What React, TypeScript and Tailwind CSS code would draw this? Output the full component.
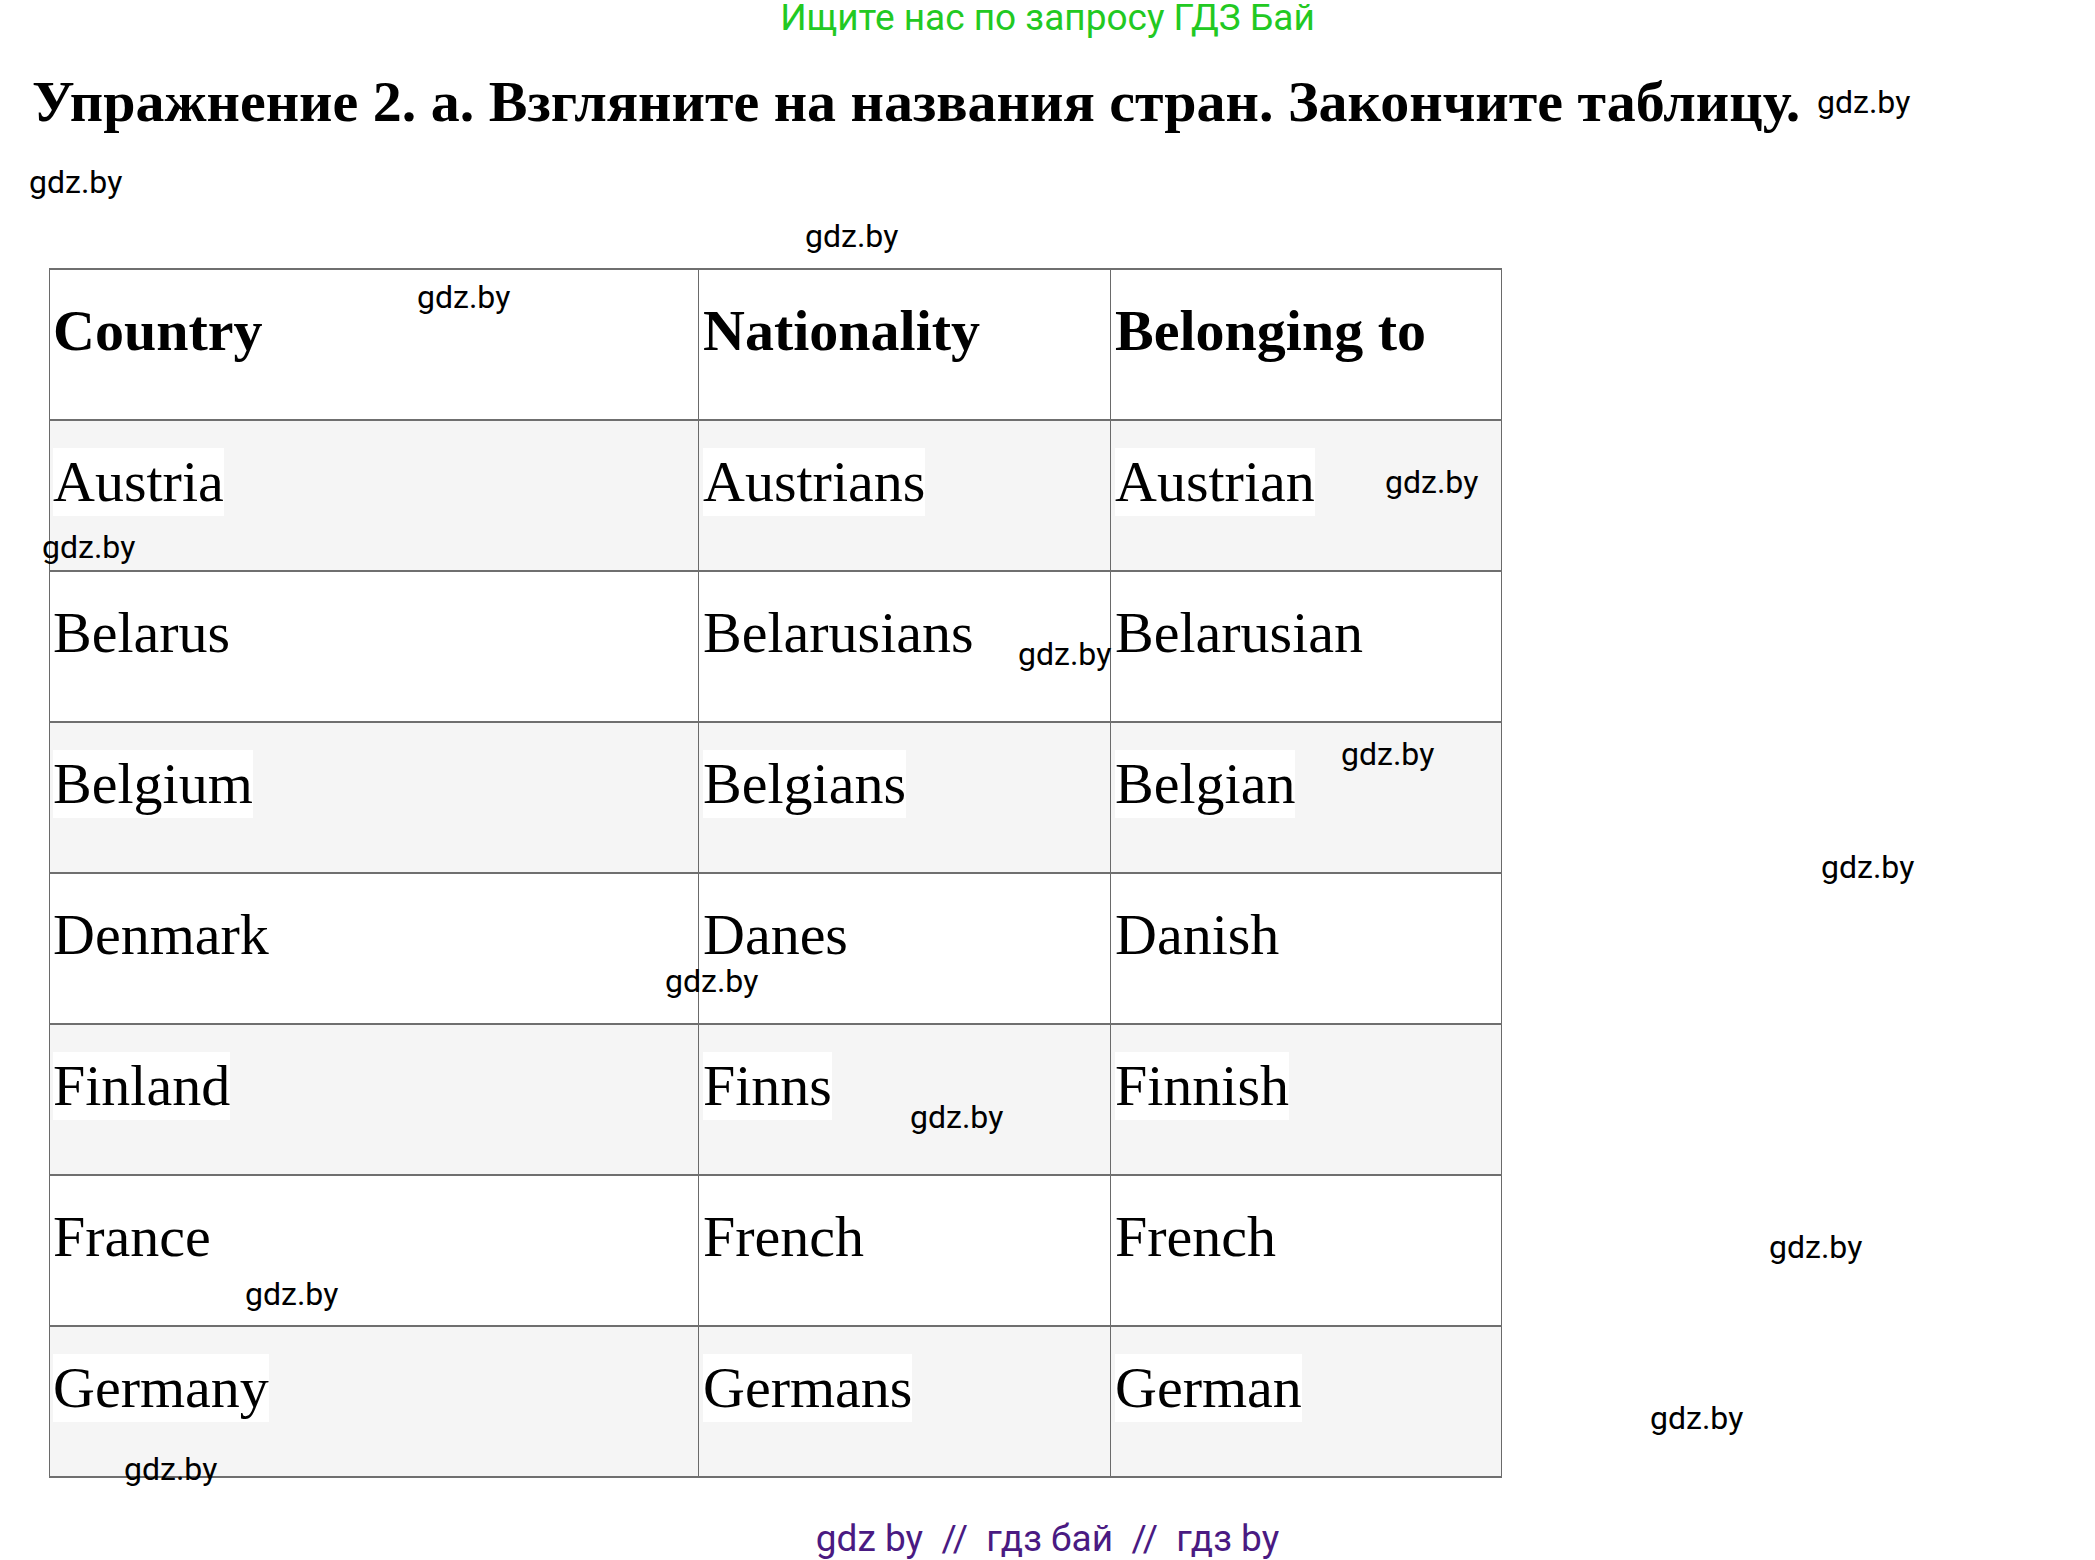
import React from "react";

const rows: [string, string, string][] = [
  ["Austria", "Austrians", "Austrian"],
  ["Belarus", "Belarusians", "Belarusian"],
  ["Belgium", "Belgians", "Belgian"],
  ["Denmark", "Danes", "Danish"],
  ["Finland", "Finns", "Finnish"],
  ["France", "French", "French"],
  ["Germany", "Germans", "German"],
];

const serif = { fontFamily: '"Liberation Serif", "Times New Roman", serif' };
const sans = { fontFamily: 'Roboto, "Noto Sans", sans-serif' };

function Cell({ text, bold, first, last }: { text: string; bold?: boolean; first?: boolean; last?: boolean }) {
  return (
    <div
      className={
        "h-full border-l border-[#6a6a6a] pt-[27px] " +
        (first ? "pl-[3px] " : "pl-[4px] ") +
        (last ? "border-r " : "")
      }
    >
      <span
        className={
          "inline-block h-[68px] bg-white text-[58px] leading-[68px] text-black whitespace-nowrap " +
          (bold ? "font-bold" : "font-normal")
        }
      >
        {text}
      </span>
    </div>
  );
}

function Row({ cells, bold, gray }: { cells: [string, string, string]; bold?: boolean; gray?: boolean }) {
  return (
    <div
      className={
        "grid h-[151px] grid-cols-[649px_412px_392px] border-b-2 border-[#6f6f6f] " +
        (gray ? "bg-[#f5f5f5]" : "bg-white")
      }
    >
      <Cell text={cells[0]} bold={bold} first />
      <Cell text={cells[1]} bold={bold} />
      <Cell text={cells[2]} bold={bold} last />
    </div>
  );
}

function W({ className }: { className: string }) {
  return (
    <div className={"absolute text-[32px] leading-[32px] text-black whitespace-nowrap " + className} style={sans}>
      gdz.by
    </div>
  );
}

export default function App() {
  return (
    <div className="relative flex h-[1560px] w-[2095px] flex-col overflow-hidden bg-white">
      <div className="h-[35px] text-center text-[37px] leading-[35px] text-[#22c922]" style={sans}>
        Ищите нас по запросу ГДЗ Бай
      </div>

      <h1
        className="mt-[34px] h-[66px] pl-[32px] text-[58px] font-bold leading-[66px] text-black whitespace-nowrap"
        style={serif}
      >
        Упражнение 2. а. Взгляните на названия стран. Закончите таблицу.
      </h1>

      <div className="ml-[49px] mt-[133px] w-[1453px] border-t-2 border-[#6f6f6f]" style={serif}>
        <Row cells={["Country", "Nationality", "Belonging to"]} bold />
        {rows.map((r, i) => (
          <Row key={r[0]} cells={r} gray={i % 2 === 0} />
        ))}
      </div>

      <div
        className="mt-[42px] h-[37px] text-center text-[37px] leading-[37px] text-[#4a1a82] whitespace-pre"
        style={sans}
      >
        {"gdz by  //  гдз бай  //  гдз by"}
      </div>

      <W className="left-[1817px] top-[86px]" />
      <W className="left-[29px] top-[166px]" />
      <W className="left-[805px] top-[220px]" />
      <W className="left-[417px] top-[281px]" />
      <W className="left-[42px] top-[531px]" />
      <W className="left-[1385px] top-[466px]" />
      <W className="left-[1018px] top-[638px]" />
      <W className="left-[1341px] top-[738px]" />
      <W className="left-[1821px] top-[851px]" />
      <W className="left-[665px] top-[965px]" />
      <W className="left-[910px] top-[1101px]" />
      <W className="left-[245px] top-[1278px]" />
      <W className="left-[1769px] top-[1231px]" />
      <W className="left-[1650px] top-[1402px]" />
      <W className="left-[124px] top-[1453px]" />
    </div>
  );
}
